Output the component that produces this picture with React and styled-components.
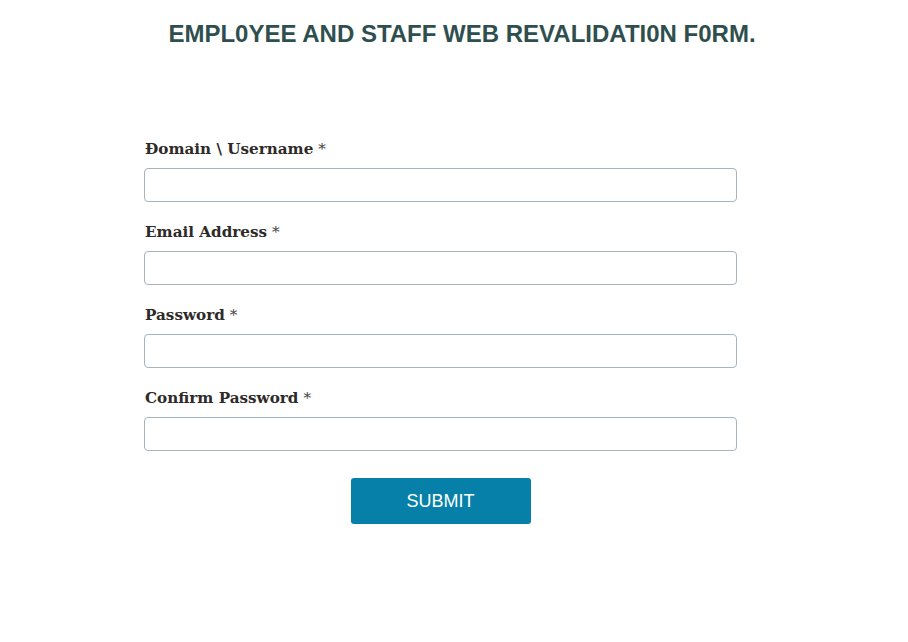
import React from 'react';
import styled, { createGlobalStyle } from 'styled-components';

const GlobalStyle = createGlobalStyle`
  html, body {
    margin: 0;
    padding: 0;
    background: #fff;
  }
  body {
    min-height: 5000px;
  }
`

const Page = styled.div`
  width: 100%;
  box-sizing: border-box;
  padding-right: 27px;
  display: flex;
  flex-direction: column;
  align-items: center;
`

const Title = styled.h1`
  margin: 20px 0 0;
  padding-left: 43px;
  font-family: "Liberation Sans", Arial, sans-serif;
  font-size: 24px;
  font-weight: 700;
  color: #2f4f4f;
  text-align: center;
  white-space: nowrap;
`

const Form = styled.form`
  width: 593px;
  margin-top: 92px;
  display: flex;
  flex-direction: column;
`

const Field = styled.div`
  display: flex;
  flex-direction: column;
  margin-bottom: 21px;
`

const Label = styled.label`
  font-family: "DejaVu Serif", Georgia, serif;
  font-size: 15.2px;
  font-weight: 700;
  color: #2e2a28;
  margin: 0 0 10px 1px;
  line-height: 18px;
`

const Required = styled.span`
  font-weight: 400;
  color: #444;
  margin-left: 5px;
`

const Input = styled.input`
  box-sizing: border-box;
  width: 100%;
  height: 34px;
  border: 1px solid #a9b3bb;
  border-radius: 4px;
  background: #fff;
  outline: none;
  font-size: 15px;
`

const Button = styled.button`
  align-self: center;
  width: 180px;
  height: 46px;
  margin-top: 6px;
  border: none;
  border-radius: 3px;
  background: #0680a9;
  color: #fff;
  font-family: "Liberation Sans", Arial, sans-serif;
  font-size: 18px;
  cursor: pointer;
`

const fields = [
  { id: 'user', label: 'Đomain \\ Username', type: 'text' },
  { id: 'email', label: 'Email Address', type: 'email' },
  { id: 'pass', label: 'Password', type: 'password' },
  { id: 'confirm', label: 'Confirm Password', type: 'password' },
]

const App = () => {
  const handleSubmit = (e) => {
    e.preventDefault()
  }

  return (
    <>
      <GlobalStyle />
      <Page>
        <Title>EMPL0YEE AND STAFF WEB REVALIDATI0N F0RM.</Title>
        <Form onSubmit={handleSubmit}>
          {fields.map((f) => (
            <Field key={f.id}>
              <Label htmlFor={f.id}>
                {f.label}
                <Required>*</Required>
              </Label>
              <Input id={f.id} type={f.type} />
            </Field>
          ))}
          <Button type="submit">SUBMIT</Button>
        </Form>
      </Page>
    </>
  )
}

export default App
